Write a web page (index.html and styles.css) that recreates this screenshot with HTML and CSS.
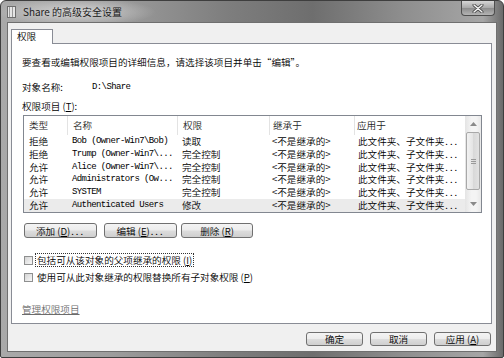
FILE: index.html
```html
<!DOCTYPE html>
<html lang="zh-CN">
<head>
    <meta charset="UTF-8">
    <title>Share 的高级安全设置</title>
    <link rel="stylesheet" href="styles.css">
</head>
<body>
<div class="window">
    <div class="titlebar">
        <svg class="appicon" width="9" height="12" viewBox="0 0 9 12">
            <rect x="0.5" y="0.5" width="8" height="11" fill="#e6e6e6" stroke="#6e6e6e"/>
            <rect x="2" y="1" width="1" height="10" fill="#9a9a9a"/>
            <rect x="5" y="1" width="1" height="10" fill="#9a9a9a"/>
        </svg>
        <span class="title">Share 的高级安全设置</span>
        <div class="close">
            <svg width="12" height="9" viewBox="0 0 12 9">
                <path d="M2 1 L10 8 M10 1 L2 8" stroke="#4a4a4a" stroke-width="3" stroke-linecap="round"/>
                <path d="M2 1 L10 8 M10 1 L2 8" stroke="#f4f4f4" stroke-width="1.4" stroke-linecap="round"/>
            </svg>
        </div>
    </div>

    <div class="client">
        <div class="tabs">
            <div class="tab">权限</div>
        </div>

        <div class="panel">
            <p class="intro">要查看或编辑权限项目的详细信息，请选择该项目并单击“编辑”。</p>

            <div class="objrow">
                <span class="objlabel">对象名称:</span>
                <span class="mono">D:\Share</span>
            </div>

            <div class="listlabel">权限项目 (<u>T</u>):</div>

            <div class="listbox">
                <div class="cols">
                    <div class="row head">
                        <div>类型</div>
                        <div>名称</div>
                        <div>权限</div>
                        <div>继承于</div>
                        <div>应用于</div>
                    </div>
                    <div class="row">
                        <div>拒绝</div>
                        <div class="mono">Bob (Owner-Win7\Bob)</div>
                        <div>读取</div>
                        <div>&lt;不是继承的&gt;</div>
                        <div>此文件夹、子文件夹<span class="dots">...</span></div>
                    </div>
                    <div class="row">
                        <div>拒绝</div>
                        <div class="mono">Trump (Owner-Win7\...</div>
                        <div>完全控制</div>
                        <div>&lt;不是继承的&gt;</div>
                        <div>此文件夹、子文件夹<span class="dots">...</span></div>
                    </div>
                    <div class="row">
                        <div>允许</div>
                        <div class="mono">Alice (Owner-Win7\...</div>
                        <div>完全控制</div>
                        <div>&lt;不是继承的&gt;</div>
                        <div>此文件夹、子文件夹<span class="dots">...</span></div>
                    </div>
                    <div class="row">
                        <div>允许</div>
                        <div class="mono">Administrators (Ow...</div>
                        <div>完全控制</div>
                        <div>&lt;不是继承的&gt;</div>
                        <div>此文件夹、子文件夹<span class="dots">...</span></div>
                    </div>
                    <div class="row">
                        <div>允许</div>
                        <div class="mono">SYSTEM</div>
                        <div>完全控制</div>
                        <div>&lt;不是继承的&gt;</div>
                        <div>此文件夹、子文件夹<span class="dots">...</span></div>
                    </div>
                    <div class="row selected">
                        <div>允许</div>
                        <div class="mono">Authenticated Users</div>
                        <div>修改</div>
                        <div>&lt;不是继承的&gt;</div>
                        <div>此文件夹、子文件夹<span class="dots">...</span></div>
                    </div>
                </div>
                <div class="scrollbar">
                    <div class="arrow">
                        <svg width="7" height="4" viewBox="0 0 7 4"><path d="M0 4 L3.5 0 L7 4Z" fill="#8a8a8a"/></svg>
                    </div>
                    <div class="thumb">
                        <svg width="5" height="5" viewBox="0 0 5 5">
                            <path d="M0 0.5 H5 M0 2.5 H5 M0 4.5 H5" stroke="#9a9a9a"/>
                        </svg>
                    </div>
                    <div class="track"></div>
                    <div class="arrow">
                        <svg width="7" height="4" viewBox="0 0 7 4"><path d="M0 0 L3.5 4 L7 0Z" fill="#8a8a8a"/></svg>
                    </div>
                </div>
            </div>

            <div class="btnrow">
                <button class="btn add">添加 (<u>D</u>)<span class="dots">...</span></button>
                <button class="btn edit">编辑 (<u>E</u>)<span class="dots">...</span></button>
                <button class="btn remove">删除 (<u>R</u>)</button>
            </div>

            <div class="check">
                <span class="box"></span>
                <span class="checktext focus">包括可从该对象的父项继承的权限 (<u>I</u>)</span>
            </div>
            <div class="check second">
                <span class="box"></span>
                <span class="checktext">使用可从此对象继承的权限替换所有子对象权限 (<u>P</u>)</span>
            </div>

            <a class="manage">管理权限项目</a>
        </div>

        <div class="footer">
            <button class="btn dlg">确定</button>
            <button class="btn dlg">取消</button>
            <button class="btn dlg">应用 (<u>A</u>)</button>
        </div>
    </div>
</div>
</body>
</html>
```

FILE: styles.css
```css
html, body {
    margin: 0;
    padding: 0;
}

body {
    font-family: "Noto Sans CJK SC", "Noto Sans", sans-serif;
    font-size: 9.6px;
    font-weight: 350;
    color: #000;
    background: #fff;
}

.window {
    width: 504px;
    height: 358px;
    box-sizing: border-box;
    border: 1px solid #3e3e3e;
    border-radius: 6px 6px 2px 2px;
    background: linear-gradient(90deg, #a9a9a9 0%, #9d9d9d 22%, #7e7e7e 45%, #6e6e6e 62%, #8e8e8e 80%, #a6a6a6 96%, #6a6a6a 100%);
    display: flex;
    flex-direction: column;
    overflow: hidden;
}

.titlebar {
    height: 21px;
    display: flex;
    align-items: center;
    background: radial-gradient(ellipse 80px 14px at 75px 11px, rgba(230, 230, 230, 0.75), rgba(230, 230, 230, 0));
}

.appicon {
    margin-left: 6px;
}

.title {
    margin-left: 7px;
    font-size: 10px;
    color: #111;
    line-height: 21px;
}

.close {
    margin-left: auto;
    margin-right: 8px;
    align-self: flex-start;
    width: 34px;
    height: 15px;
    box-sizing: border-box;
    border: 1px solid #4e4e4e;
    border-top: none;
    border-radius: 0 0 4px 4px;
    background: linear-gradient(#d6d6d6, #a8a8a8 50%, #8c8c8c 51%, #b4b4b4);
    display: flex;
    align-items: center;
    justify-content: center;
}

.client {
    margin: 0 6px;
    height: 330px;
    box-sizing: border-box;
    border: 1px solid #6f6f6f;
    background: #f0f0f0;
    display: flex;
    flex-direction: column;
}

.tabs {
    display: flex;
    padding: 6px 0 0 3px;
}

.tab {
    position: relative;
    z-index: 1;
    width: 42px;
    height: 15px;
    box-sizing: border-box;
    margin-bottom: -1px;
    padding-left: 5px;
    border: 1px solid #898c95;
    border-bottom: none;
    background: #fff;
    line-height: 13px;
}

.panel {
    margin: 0 4px 0 3px;
    height: 281px;
    box-sizing: border-box;
    border: 1px solid #898c95;
    background: #fff;
    padding: 12px 9px 0 10px;
    display: flex;
    flex-direction: column;
}

.intro {
    margin: 0;
    line-height: 12px;
    height: 12px;
    white-space: nowrap;
}

.objrow {
    margin-top: 13px;
    display: flex;
    align-items: center;
    line-height: 12px;
    height: 12px;
}

.objlabel {
    width: 70px;
}

.mono {
    font-family: "Liberation Mono", "DejaVu Sans Mono", monospace;
    font-size: 9px;
    font-weight: 400;
    letter-spacing: -0.6px;
}

.listlabel {
    margin-top: 7px;
    line-height: 12px;
    height: 12px;
}

.listbox {
    margin-top: 3px;
    margin-left: 1px;
    height: 98px;
    box-sizing: border-box;
    border: 1px solid #828790;
    display: flex;
    overflow: hidden;
}

.cols {
    flex: 1;
}

.row {
    display: grid;
    grid-template-columns: 43px 110px 92px 85px 1fr;
    height: 12.8px;
    line-height: 12.8px;
    white-space: nowrap;
}

.row div {
    padding-left: 5px;
    overflow: hidden;
}

.row div:nth-child(4) {
    padding-left: 3px;
}

.row div:nth-child(5) {
    padding-left: 4px;
}

.row.head {
    height: 19px;
    line-height: 19px;
    color: #1e1e1e;
}

.row.head div + div {
    border-left: 1px solid #e3e3e3;
}

.row.head div:nth-child(5) {
    padding-left: 2px;
}

.row.selected {
    background: #ebebeb;
}

.dots {
    letter-spacing: 2px;
    margin-left: 1px;
}

.scrollbar {
    width: 16px;
    display: flex;
    flex-direction: column;
    background: linear-gradient(90deg, #e4e4e4, #f4f4f4 40%, #f4f4f4 70%, #e8e8e8);
}

.arrow {
    height: 16px;
    display: flex;
    align-items: center;
    justify-content: center;
}

.thumb {
    height: 58px;
    margin: 0 1px;
    box-sizing: border-box;
    border: 1px solid #a8a8a8;
    border-radius: 2px;
    background: linear-gradient(90deg, #f2f2f2, #e4e4e4 50%, #d8d8d8 51%, #e2e2e2);
    display: flex;
    align-items: center;
    justify-content: center;
}

.track {
    flex: 1;
}

.btnrow {
    margin-top: 10px;
    margin-left: 2px;
    display: flex;
}

.btn {
    height: 15px;
    box-sizing: border-box;
    padding: 0;
    border: 1px solid #707070;
    border-radius: 3px;
    background: linear-gradient(#f4f4f4 0%, #ececec 48%, #dddddd 52%, #cfcfcf 100%);
    font-family: "Noto Sans CJK SC", "Noto Sans", sans-serif;
    font-size: 9.6px;
    font-weight: 350;
    line-height: 12px;
    color: #000;
    text-align: center;
}

.btn.add {
    width: 73px;
}

.btn.edit {
    width: 73px;
    margin-left: 7px;
}

.btn.remove {
    width: 72px;
    margin-left: 4px;
}

.check {
    margin-top: 15px;
    margin-left: 2px;
    display: flex;
    align-items: center;
    height: 14px;
}

.check.second {
    margin-top: 3px;
}

.box {
    width: 9px;
    height: 9px;
    box-sizing: border-box;
    border: 1px solid #8e8f8f;
    background: linear-gradient(135deg, #d4d4d4, #f8f8f8);
}

.checktext {
    margin-left: 2px;
    padding: 0 1px;
    border: 1px dotted transparent;
    line-height: 12px;
}

.checktext.focus {
    border-color: #333;
}

.manage {
    margin-top: 19px;
    align-self: flex-start;
    color: #6c6c6c;
    text-decoration: underline;
    line-height: 12px;
}

.footer {
    display: flex;
    justify-content: flex-end;
    gap: 7px;
    padding: 8px 5px 0 0;
}

.btn.dlg {
    width: 57px;
    height: 14px;
    line-height: 11px;
}
```
